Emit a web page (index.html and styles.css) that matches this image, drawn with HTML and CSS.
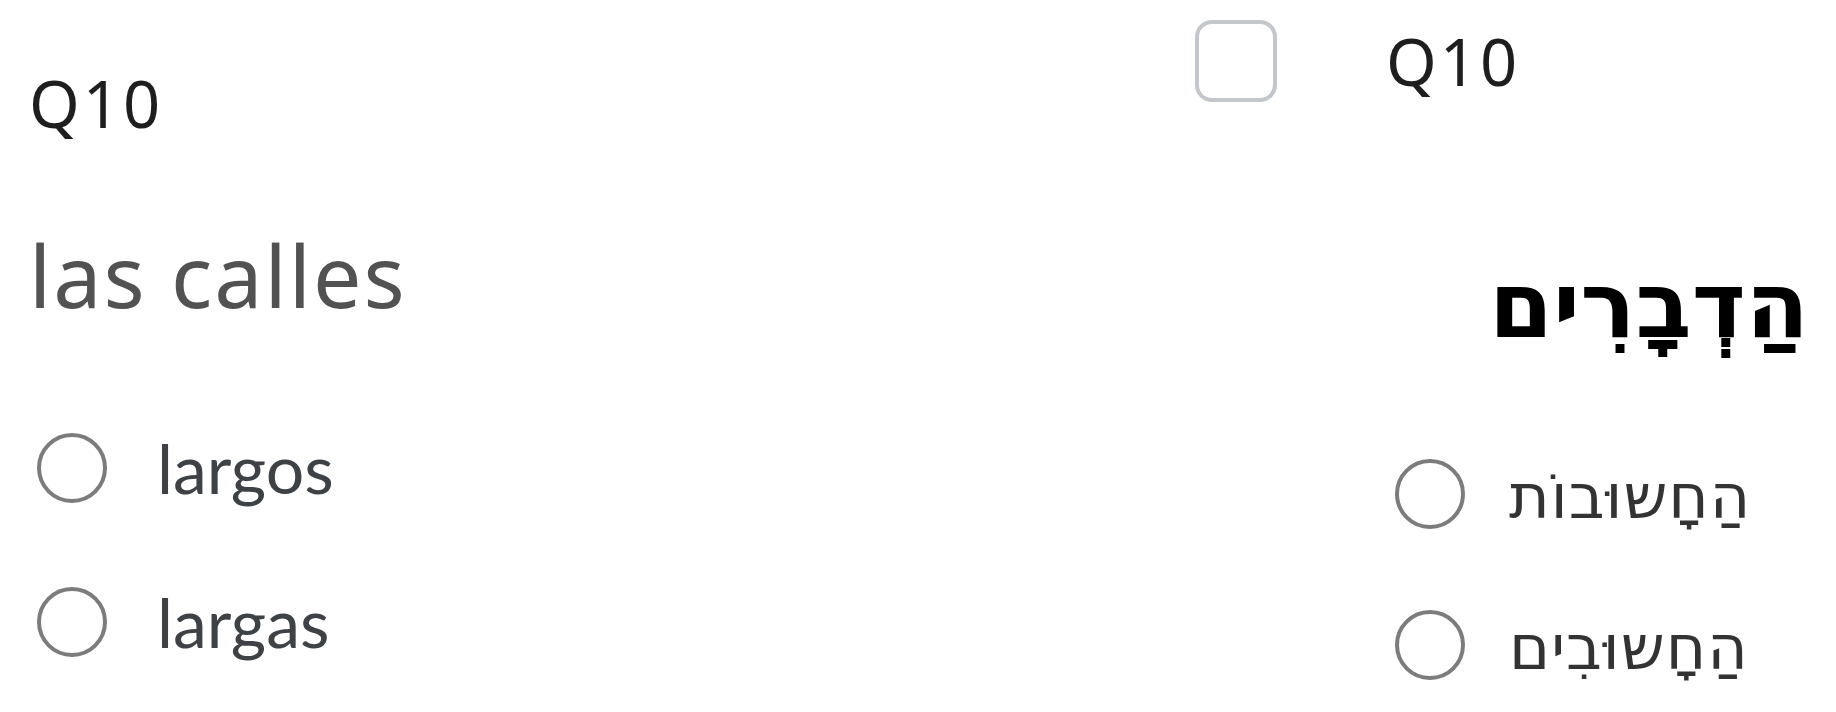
FILE: index.html
```html
<!DOCTYPE html>
<html lang="es">
<head>
<meta charset="utf-8">
<title>Q10</title>
<link rel="stylesheet" href="styles.css">
</head>
<body>
<main class="page">
  <section class="question question-es">
    <div class="qid">Q10</div>
    <div class="qtext">las calles</div>
    <ul class="choices">
      <li class="choice"><span class="radio"></span><span class="label">largos</span></li>
      <li class="choice"><span class="radio"></span><span class="label">largas</span></li>
    </ul>
  </section>
  <section class="question question-he">
    <div class="qhead">
      <span class="checkbox"></span>
      <span class="qid">Q10</span>
    </div>
    <div class="qtext-he" dir="rtl" lang="he">הַדְבָרִים</div>
    <ul class="choices choices-he">
      <li class="choice"><span class="radio"></span><span class="label-he" dir="rtl" lang="he">הַחָשוּבוֹת</span></li>
      <li class="choice"><span class="radio"></span><span class="label-he" dir="rtl" lang="he">הַחָשוּבִים</span></li>
    </ul>
  </section>
</main>
</body>
</html>
```

FILE: styles.css
```css
html, body {
  margin: 0;
  padding: 0;
  background: #ffffff;
}

.page {
  display: flex;
  justify-content: space-between;
  align-items: flex-start;
  width: 1836px;
  height: 712px;
  padding: 0 33px 0 29px;
  box-sizing: border-box;
  overflow: hidden;
}

.question {
  display: flex;
  flex-direction: column;
}

.question-es {
  padding-top: 71px;
}

.question-he {
  width: 608px;
  padding-top: 20px;
}

.qid {
  font-family: "Noto Sans", "Open Sans", sans-serif;
  font-size: 65px;
  line-height: 64px;
  letter-spacing: 3px;
  color: #1e1e1e;
}

.qtext {
  margin-top: 97px;
  font-family: "Noto Sans", "Open Sans", sans-serif;
  font-size: 86px;
  line-height: 86px;
  letter-spacing: 2px;
  color: #525252;
}

.choices {
  list-style: none;
  margin: 115px 0 0 0;
  padding: 0 0 0 8px;
  display: flex;
  flex-direction: column;
  gap: 84px;
}

.choice {
  display: flex;
  align-items: center;
  height: 70px;
  gap: 50px;
}

.radio {
  flex: none;
  width: 70px;
  height: 70px;
  box-sizing: border-box;
  border: 4px solid #7c7c7c;
  border-radius: 50%;
}

.label {
  font-family: Lato, "Noto Sans", sans-serif;
  font-size: 68px;
  line-height: 70px;
  color: #3e4246;
}

.qhead {
  display: flex;
  align-items: center;
  gap: 109px;
}

.checkbox {
  flex: none;
  width: 82px;
  height: 82px;
  box-sizing: border-box;
  border: 4px solid #c3c7cb;
  border-radius: 17px;
}

.qtext-he {
  margin-top: 158px;
  margin-right: -6px;
  text-align: right;
  font-family: "DejaVu Sans", "Liberation Sans", sans-serif;
  font-size: 92px;
  line-height: 92px;
  font-weight: bold;
  color: #000000;
}

.choices-he {
  margin-top: 107px;
  padding-left: 200px;
  gap: 81px;
}

.choices-he .choice {
  gap: 44px;
}

.label-he {
  font-family: "DejaVu Sans", "Liberation Sans", sans-serif;
  font-size: 62px;
  line-height: 70px;
  letter-spacing: 1px;
  color: #333333;
  padding-top: 6px;
}
```
